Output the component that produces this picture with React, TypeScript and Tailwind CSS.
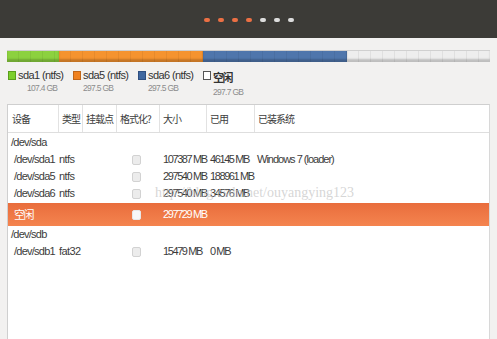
const sans = "font-['Liberation_Sans','Noto_Sans_CJK_SC',sans-serif]";
const cjk = "font-['Noto_Sans_CJK_SC',sans-serif]";

const segments = [
  { w: "w-[52px]", bg: "bg-[#8cd13f]" },
  { w: "w-[144px]", bg: "bg-[#f5932f]" },
  { w: "w-[144px]", bg: "bg-[#4f76ac]" },
  { w: "flex-1", bg: "bg-[#eeeeee]" },
];

const legend = [
  { name: "sda1 (ntfs)", size: "107.4 GB", box: "bg-[#7ccf2b] border-[#5a9e1c]", sizePad: "pl-[9px]" },
  { name: "sda5 (ntfs)", size: "297.5 GB", box: "bg-[#f08220] border-[#c0661a]", sizePad: "pl-0" },
  { name: "sda6 (ntfs)", size: "297.5 GB", box: "bg-[#3f67a0] border-[#2f4f80]", sizePad: "pl-0" },
  { name: "空闲", size: "297.7 GB", box: "bg-white border-[#555]", sizePad: "pl-0", cjk: true },
];

const cols = "grid grid-cols-[50px_24px_34px_43px_47px_48px_1fr]";

type Row = {
  dev: string;
  type?: string;
  size?: string;
  used?: string;
  os?: string;
  check?: boolean;
  indent?: boolean;
  selected?: boolean;
};

const rows: Row[] = [
  { dev: "/dev/sda" },
  { dev: "/dev/sda1", type: "ntfs", size: "107387 MB", used: "46145 MB", os: "Windows 7 (loader)", check: true, indent: true },
  { dev: "/dev/sda5", type: "ntfs", size: "297540 MB", used: "188961 MB", check: true, indent: true },
  { dev: "/dev/sda6", type: "ntfs", size: "297540 MB", used: "34576 MB", check: true, indent: true },
  { dev: "空闲", size: "297729 MB", check: true, indent: true, selected: true },
  { dev: "/dev/sdb" },
  { dev: "/dev/sdb1", type: "fat32", size: "15479 MB", used: "0 MB", check: true, indent: true },
];

function Checkbox({ light }: { light?: boolean }) {
  return (
    <div
      className={`w-[9px] h-[10px] rounded-[2px] border ${
        light ? "bg-[#f7f7f7] border-[#e8e8e8]" : "bg-[#ececec] border-[#d2d2d2]"
      }`}
    />
  );
}

function TableRow({ row }: { row: Row }) {
  const base = row.selected
    ? "h-[23px] mt-px bg-gradient-to-b from-[#e96d3c] to-[#f4844f] text-white"
    : "h-[17px] text-[#3c3c3c]";
  const devCls = row.dev === "空闲" ? `${cjk} text-[11px] tracking-[-1.5px]` : "tracking-[-0.75px]";
  return (
    <div className={`${cols} ${base} items-center text-[11px] whitespace-nowrap`}>
      <div className={`${row.indent ? "pl-[6px]" : "pl-[3px]"} ${devCls}`}>{row.dev}</div>
      <div className="pl-px tracking-[-0.6px]">{row.type}</div>
      <div />
      <div className="flex justify-center pr-[2px]">{row.check && <Checkbox light={row.selected} />}</div>
      <div className="pl-[4px] tracking-[-1.4px]">{row.size}</div>
      <div className="pl-[4px] tracking-[-1.4px]">{row.used}</div>
      <div className="pl-[3px] tracking-[-1px]">{row.os}</div>
    </div>
  );
}

export default function App() {
  return (
    <div className={`relative w-[497px] h-[339px] overflow-hidden bg-[#f2f1f0] ${sans}`}>
      <div className="h-[38px] bg-[#3c3b37] flex items-center justify-center gap-[8px] pt-px">
        {[0, 1, 2, 3, 4, 5, 6].map((i) => (
          <div
            key={i}
            className={`w-[6px] h-[4px] rounded-full ${i < 4 ? "bg-[#ec7044]" : "bg-[#dcdcdc]"}`}
          />
        ))}
      </div>

      <div className="px-[7px] pt-[12px]">
        <div className="flex h-[12px] border-t border-[#d0d0d0] overflow-hidden">
          {segments.map((s, i) => (
            <div
              key={i}
              className={`${s.w} ${s.bg} h-full bg-[repeating-linear-gradient(90deg,transparent_0_11px,rgba(0,0,0,0.06)_11px_12px)] shadow-[inset_0_-3px_2px_rgba(0,0,0,0.2)]`}
            />
          ))}
        </div>

        <div className="flex mt-[8px] h-[34px]">
          {legend.map((l) => (
            <div key={l.name} className="w-[65px] flex items-start pl-px">
              <div className={`w-[8px] h-[9px] mt-[1px] border ${l.box}`} />
              <div className="pl-[2px] whitespace-nowrap">
                <div
                  className={
                    l.cjk
                      ? `text-[11px] leading-[16px] mt-[-1px] tracking-[-1.5px] text-[#333] font-bold ${cjk}`
                      : "text-[11px] leading-[12px] mt-[-1px] tracking-[-0.6px] text-[#333]"
                  }
                >
                  {l.name}
                </div>
                <div
                  className={`text-[8.5px] leading-[12px] tracking-[-0.7px] text-[#8c8c8c] mt-[1px] ${l.sizePad}`}
                >
                  {l.size}
                </div>
              </div>
            </div>
          ))}
        </div>
      </div>

      <div className="mx-[7px] h-[240px] bg-white border border-[#cfcfcf] border-r-[#d8d8d8]">
        <div
          className={`${cols} h-[28px] items-center border-b border-[#dedede] text-[10px] tracking-[-1px] text-[#3c3c3c] ${cjk}`}
        >
          {["设备", "类型", "挂载点", "格式化?", "大小", "已用", "已装系统"].map((h, i) => (
            <div
              key={h}
              className={`h-full flex items-center whitespace-nowrap ${i === 0 ? "pl-[4px]" : "pl-[3px] border-l border-[#e2e2e2]"}`}
            >
              {h}
            </div>
          ))}
        </div>
        <div className="pt-px">
          {rows.map((r) => (
            <TableRow key={r.dev} row={r} />
          ))}
        </div>
      </div>

      <div className="absolute left-[155px] top-[184px] text-[14px] leading-[18px] text-[#c4c4c4]/70 font-['Liberation_Serif',serif] pointer-events-none whitespace-nowrap">
        http://blog.csdn.net/ouyangying123
      </div>
    </div>
  );
}
